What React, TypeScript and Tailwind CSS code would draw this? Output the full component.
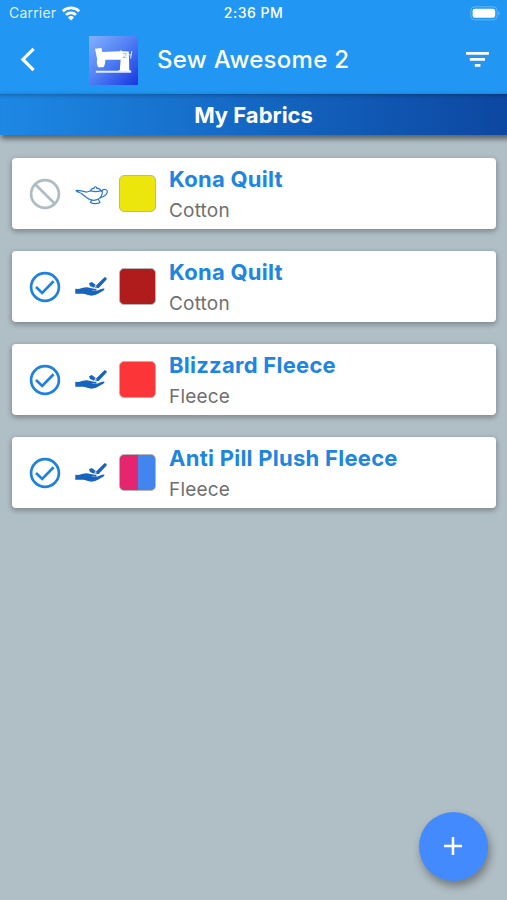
import React from 'react'

type Fabric = {
  name: string
  material: string
  owned: boolean
  swatch: string
}

const fabrics: Fabric[] = [
  { name: 'Kona Quilt', material: 'Cotton', owned: false, swatch: 'bg-[#ece60c]' },
  { name: 'Kona Quilt', material: 'Cotton', owned: true, swatch: 'bg-[#b01c1c]' },
  { name: 'Blizzard Fleece', material: 'Fleece', owned: true, swatch: 'bg-[#fb3538]' },
  {
    name: 'Anti Pill Plush Fleece',
    material: 'Fleece',
    owned: true,
    swatch: 'bg-linear-to-r from-[#e5266f] from-50% to-[#4285ee] to-50%',
  },
]

function WifiIcon() {
  return (
    <svg width="20" height="15" viewBox="0 0 20 15" fill="none" stroke="#fff" strokeWidth="2.7">
      <path d="M1.8 5.2a11.8 11.8 0 0 1 16.4 0" />
      <path d="M5 8.9a7.2 7.2 0 0 1 10 0" />
      <path d="M10 14.5 6.9 11.5a4.5 4.5 0 0 1 6.2 0z" fill="#fff" stroke="none" />
    </svg>
  )
}

function BatteryIcon() {
  return (
    <svg width="31" height="15" viewBox="0 0 31 15">
      <rect x=".8" y=".8" width="26.4" height="13" rx="4" fill="none" stroke="#fff" strokeOpacity=".3" />
      <rect x="2.6" y="2.8" width="22.6" height="9" rx="2.2" fill="#fff" />
      <path d="M28.5 5.2v4a2.2 2.2 0 0 0 0-4z" fill="#fff" fillOpacity=".35" />
    </svg>
  )
}

function SewingLogo() {
  return (
    <svg width="49" height="49" viewBox="0 0 49 49">
      <defs>
        <linearGradient id="logo" x1="0" y1="0" x2="1" y2="1">
          <stop offset="0" stopColor="#83b1fd" />
          <stop offset=".5" stopColor="#4d7df3" />
          <stop offset="1" stopColor="#1736e2" />
        </linearGradient>
      </defs>
      <rect width="49" height="49" fill="url(#logo)" />
      <path
        d="M6 12.8 12.4 12l.9 4 17.7-.8.8-1.1 1.4 1.1 6.6.4.5 18.7h1.3v1H29.6v-1h1.2l.8-10.6H16.4c-.1 3.1-.6 5.6-2 7.5H9.3c-1.6-2-1.7-5-1.2-8.4z"
        fill="#fff"
      />
      <path d="M6.8 34.8h35.4v1.9H6.8z" fill="#e2ecff" />
      <path d="M40 18.8h2.2M42.8 15l-1.2 7.6" stroke="#dce8ff" strokeWidth="1" />
      <text x="33.4" y="22" fontSize="8" fill="#8c9fe0" fontFamily="Liberation Sans, sans-serif">2</text>
    </svg>
  )
}

function StatusIcon({ owned }: { owned: boolean }) {
  return (
    <svg width="36" height="36" viewBox="0 0 36 36" fill="none" strokeWidth="2.7" stroke={owned ? '#1e82dc' : '#afbcc1'}>
      <circle cx="18" cy="18" r="13.9" />
      {owned ? <path d="m9 18 6.2 5.9L26.6 12.2" /> : <path d="m8.2 8.2 19.6 19.6" />}
    </svg>
  )
}

function LampIcon() {
  return (
    <svg width="34" height="36" viewBox="0 0 34 36" fill="none" stroke="#2d78cd" strokeWidth="1.2" strokeLinejoin="round" strokeLinecap="round">
      <path d="M1 14.5c3.7-.5 7 .6 9.8 1.5 1.6.5 3.3-.7 4.8-1.2 3.2 1 7.4 1 10.5-.2 1.3.5 1.4 1.1 1.2 2.4-.5 3.6-3 5.9-6 6.9-2.1.7-4.8.4-6.8-.5-3-1.4-5.3-3.6-7.7-5.6-1.8-1.5-4.1-1.3-5.8-3.3z" />
      <path d="M26.6 15.4c.9-1.8 2.8-2.4 4.4-1.7 1.9.9 1.5 3.2.2 4.7-1.4 1.5-3.6 2.6-5.8 3.4" />
      <path d="M15.6 14.8c.4-1.6 2-2.5 3.7-2.7-.6-1.8 2.8-1.8 2.2 0 1.9.2 3.9 1 4.4 2.5M17 23.8l-1.6 2.7c2.4 1.5 7.2 1.5 9.6 0L23.4 23.3" />
    </svg>
  )
}

function HandIcon() {
  return (
    <svg width="34" height="36" viewBox="0 0 34 36" fill="#1763bd">
      <path d="M.3 19.8c2.6.3 4.6-.1 6.7-.8 3-1 5.8-1.1 8.2-.1l5.6 1.1c1 .2 1.1 1.3.1 1.5l-4.6.2c3.6.9 6.9-.3 9.9-1.7 1.7-.7 3-.8 3.3-.1.2.8-1.2 1.7-2.7 2.6-2.8 1.7-5.7 3.7-9.2 4.1-3.8.4-6.5-1.6-9.8-1.8-2.6-.2-5 .1-7.5-.1z" />
      <path d="m14 14.2 2.8-1.2 4 3-1.8 2.7-4-1.6z" />
      <path d="M29.2 8.6 20.6 17l-.3 2.3 3.4-.2 7.9-8.7c.8-1.1-1.2-2.8-2.4-1.8z" />
      <path d="m19.7 16.8 2.4 1.6" stroke="#fff" strokeWidth=".6" />
    </svg>
  )
}

function FabricCard({ fabric }: { fabric: Fabric }) {
  return (
    <div className="flex h-[71px] items-center rounded-[4px] bg-white pl-[15px] shadow-[0_2px_5px_1px_rgba(0,0,0,0.26)]">
      <StatusIcon owned={fabric.owned} />
      <div className="ml-3 w-[34px] shrink-0">{fabric.owned ? <HandIcon /> : <LampIcon />}</div>
      <div className={`ml-[10px] h-[37px] w-[37px] shrink-0 rounded-[5px] border-[1.5px] border-[#b8b4b4] bg-origin-border ${fabric.swatch}`} />
      <div className="ml-[13px] pt-[3px] whitespace-nowrap">
        <h2 className="text-[22px] leading-[30px] font-bold tracking-[0.26px] text-[#2085df]">{fabric.name}</h2>
        <p className="mt-[2px] text-[19px] leading-[30px] tracking-[0.2px] text-[#6f6f6f]">{fabric.material}</p>
      </div>
    </div>
  )
}

export default function App() {
  return (
    <div className="relative flex h-[900px] w-[507px] flex-col overflow-hidden bg-[#b0bec5] font-['Inter',sans-serif]">
      <header className="bg-[#2196f3] text-white">
        <div className="grid h-[27px] grid-cols-3 items-center pr-[6px] pl-[9px] text-[14px] leading-5">
          <div className="flex items-center gap-[5px] text-[#dff0ff]">
            <span className="pb-px tracking-[0.2px]">Carrier</span>
            <WifiIcon />
          </div>
          <span className="pr-[3px] pb-px text-center font-medium tracking-[0.5px]">2:36 PM</span>
          <div className="flex justify-end">
            <BatteryIcon />
          </div>
        </div>
        <div className="flex h-[67px] items-center pr-[17px] pb-[1px] pl-[19px]">
          <svg width="20" height="28" viewBox="0 0 20 28" fill="none" stroke="#fff" strokeWidth="3.2">
            <path d="M14.6 2.8 3.9 13.4l10.7 10.7" />
          </svg>
          <div className="ml-[50px]">
            <SewingLogo />
          </div>
          <h1 className="ml-[19px] flex-1 text-[24px] font-medium tracking-[0.3px] whitespace-nowrap">Sew Awesome 2</h1>
          <svg width="26" height="18" viewBox="0 0 26 18" fill="#fff">
            <path d="M2 .9h23v2.8H2zM5.8 7H21v2.7H5.8zM10.8 13.1h5.6v2.7h-5.6z" />
          </svg>
        </div>
      </header>

      <div className="flex h-[41px] items-center justify-center bg-linear-to-r from-[#1e88e5] to-[#0d47a1] pt-px text-[22px] font-bold text-white shadow-[inset_0_5px_4px_-4px_rgba(0,0,0,0.3),2px_3px_5px_1px_rgba(0,0,0,0.48)]">
        My Fabrics
      </div>

      <main className="flex flex-col gap-[22px] pt-[23px] pr-[11px] pl-3">
        {fabrics.map((fabric, index) => (
          <FabricCard key={index} fabric={fabric} />
        ))}
      </main>

      <button className="absolute right-[19px] bottom-[19px] flex h-[69px] w-[69px] items-center justify-center rounded-full bg-[#448aff] pr-px pb-px shadow-[2px_5px_9px_rgba(0,0,0,0.36)]">
        <svg width="18" height="18" viewBox="0 0 18 18" stroke="#fff" strokeWidth="2.5">
          <path d="M9 0v18M0 9h18" />
        </svg>
      </button>
    </div>
  )
}
